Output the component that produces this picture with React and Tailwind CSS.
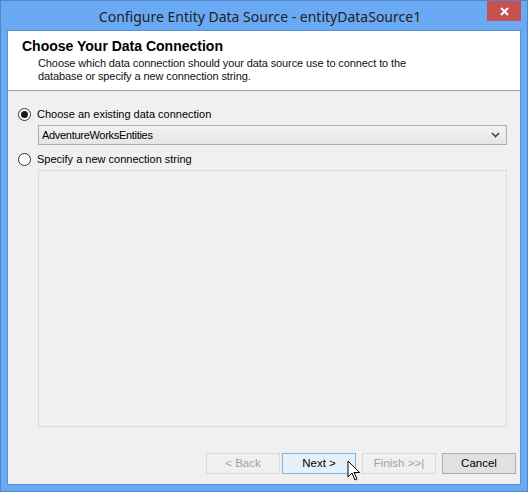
import React from "react";

const ui = { fontFamily: '"Liberation Sans", Arial, sans-serif' };

const Radio = ({ checked }) => (
  <span className="w-[13px] h-[13px] rounded-full border border-[#333] bg-white flex items-center justify-center shrink-0">
    {checked && <span className="w-[7px] h-[7px] rounded-full bg-[#1a1a1a]" />}
  </span>
);

const WizardButton = ({ children, disabled, hot }) => {
  let cls = "border-[#adadad] bg-[#e1e1e1] text-black";
  if (disabled) cls = "border-[#d9d9d9] bg-[#f0f0f0] text-[#a0a0a0]";
  if (hot) cls = "border-[#7eb4ea] bg-[#e5f1fb] text-black";
  return (
    <div
      className={`w-[74px] h-[21px] border flex items-center justify-center text-[11.5px] ${cls}`}
    >
      {children}
    </div>
  );
};

const Cursor = () => (
  <svg width="14" height="22" viewBox="0 0 14 22" className="absolute left-[346px] top-[459px]">
    <path
      d="M1 1 L1 17 L5 13 L8 20 L10 19 L7 12.5 L12.5 12.5 Z"
      fill="#fff"
      stroke="#000"
      strokeWidth="1"
      strokeLinejoin="miter"
    />
  </svg>
);

export default function App() {
  return (
    <div
      className="relative w-[528px] h-[492px] bg-[#6aa9f4] border border-[#5486c4] flex flex-col"
      style={ui}
    >
      {/* title bar */}
      <div className="relative h-[29px] flex items-center justify-center">
        <span
          className="text-[14px] text-[#222] pr-[8px] pt-[2px]"
          style={{ fontFamily: '"Noto Sans", "Open Sans", sans-serif' }}
        >
          Configure Entity Data Source - entityDataSource1
        </span>
        <div className="absolute right-[6px] top-0 w-[34px] h-[20px] bg-[#c75050] flex items-center justify-center">
          <svg width="9" height="9" viewBox="0 0 9 9">
            <path d="M1 1 L8 8 M8 1 L1 8" stroke="#fff" strokeWidth="2" />
          </svg>
        </div>
      </div>

      {/* client area */}
      <div className="flex-1 mx-[6px] mb-[6px] border border-[#5a8fd2] bg-[#f0f0f0] flex flex-col">
        <div className="bg-white h-[60px] border-b border-[#a0a0a0] pl-[14px] pt-[7px]">
          <div className="text-[14px] font-bold text-black leading-[17px]">
            Choose Your Data Connection
          </div>
          <div className="pl-[16px] mt-[2px] text-[11px] leading-[13px] text-[#111] tracking-[-0.1px]">
            <div>Choose which data connection should your data source use to connect to the</div>
            <div>database or specify a new connection string.</div>
          </div>
        </div>

        <div className="flex flex-col pl-[10px] pr-[13px] pt-[16px] text-[11px] text-black">
          <div className="flex items-center gap-[6px] h-[14px]">
            <Radio checked />
            <span>Choose an existing data connection</span>
          </div>

          <div className="ml-[20px] mt-[4px] h-[20px] border border-[#acacac] bg-gradient-to-b from-[#f2f2f2] to-[#e5e5e5] flex items-center justify-between pl-[3px] pr-[6px]">
            <span className="text-[11px] tracking-[-0.3px]">AdventureWorksEntities</span>
            <svg width="9" height="6" viewBox="0 0 9 6">
              <path d="M1 1 L4.5 4.5 L8 1" fill="none" stroke="#444" strokeWidth="1.6" />
            </svg>
          </div>

          <div className="flex items-center gap-[6px] h-[14px] mt-[7px]">
            <Radio />
            <span>Specify a new connection string</span>
          </div>

          <div className="ml-[20px] mt-[4px] h-[257px] border border-[#dcdcdc] bg-[#f0f0f0]" />
        </div>

        {/* wizard buttons: Back/Next sit closer together */}
        <div className="mt-auto mb-[10px] flex justify-end gap-[6px] pr-[4px]">
          <div className="flex gap-[2px]">
            <WizardButton disabled>&lt; Back</WizardButton>
            <WizardButton hot>Next &gt;</WizardButton>
          </div>
          <WizardButton disabled>Finish &gt;&gt;|</WizardButton>
          <WizardButton>Cancel</WizardButton>
        </div>
      </div>

      <Cursor />
    </div>
  );
}
